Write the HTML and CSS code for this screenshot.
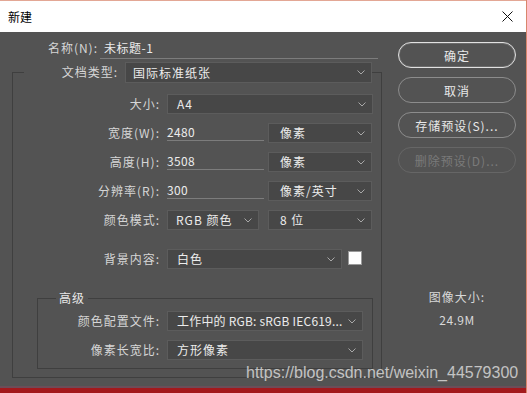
FILE: index.html
```html
<!DOCTYPE html>
<html lang="zh-CN">
<head>
    <meta charset="UTF-8">
    <meta name="viewport" content="width=device-width, initial-scale=1.0">
    <title>新建</title>
    <link rel="stylesheet" href="styles.css">
</head>
<body>
    <div class="window">
        <div class="titlebar">
            <span class="title">新建</span>
            <svg class="close" width="11" height="11" viewBox="0 0 11 11">
                <path d="M0.5 0.5 L10.5 10.5 M10.5 0.5 L0.5 10.5" stroke="#111" stroke-width="1" fill="none"/>
            </svg>
        </div>

        <div class="dialog">
            <div class="form-col">
                <div class="name-row">
                    <span class="name-label">名称(N):</span>
                    <div class="name-input">未标题-1</div>
                </div>

                <fieldset class="group">
                    <legend class="group-head">
                        <div class="row">
                            <span class="label head-label">文档类型:</span>
                            <div class="select head-select">国际标准纸张<svg class="chev" width="8" height="5" viewBox="0 0 8 5"><path d="M0.5 0.5 L4 4 L7.5 0.5" stroke="#a8a8a8" fill="none"/></svg></div>
                        </div>
                    </legend>

                    <div class="row">
                        <span class="label">大小:</span>
                        <div class="select grow">A4<svg class="chev" width="8" height="5" viewBox="0 0 8 5"><path d="M0.5 0.5 L4 4 L7.5 0.5" stroke="#a8a8a8" fill="none"/></svg></div>
                    </div>
                    <div class="row">
                        <span class="label">宽度(W):</span>
                        <div class="field">2480</div>
                        <div class="select unit">像素<svg class="chev" width="8" height="5" viewBox="0 0 8 5"><path d="M0.5 0.5 L4 4 L7.5 0.5" stroke="#a8a8a8" fill="none"/></svg></div>
                    </div>
                    <div class="row">
                        <span class="label">高度(H):</span>
                        <div class="field">3508</div>
                        <div class="select unit">像素<svg class="chev" width="8" height="5" viewBox="0 0 8 5"><path d="M0.5 0.5 L4 4 L7.5 0.5" stroke="#a8a8a8" fill="none"/></svg></div>
                    </div>
                    <div class="row">
                        <span class="label">分辨率(R):</span>
                        <div class="field">300</div>
                        <div class="select unit">像素/英寸<svg class="chev" width="8" height="5" viewBox="0 0 8 5"><path d="M0.5 0.5 L4 4 L7.5 0.5" stroke="#a8a8a8" fill="none"/></svg></div>
                    </div>
                    <div class="row">
                        <span class="label">颜色模式:</span>
                        <div class="select mode">RGB 颜色<svg class="chev" width="8" height="5" viewBox="0 0 8 5"><path d="M0.5 0.5 L4 4 L7.5 0.5" stroke="#a8a8a8" fill="none"/></svg></div>
                        <div class="select unit">8 位<svg class="chev" width="8" height="5" viewBox="0 0 8 5"><path d="M0.5 0.5 L4 4 L7.5 0.5" stroke="#a8a8a8" fill="none"/></svg></div>
                    </div>
                    <div class="row bg-row">
                        <span class="label">背景内容:</span>
                        <div class="select bg">白色<svg class="chev" width="8" height="5" viewBox="0 0 8 5"><path d="M0.5 0.5 L4 4 L7.5 0.5" stroke="#a8a8a8" fill="none"/></svg></div>
                        <div class="swatch"></div>
                    </div>

                    <fieldset class="advanced">
                        <legend class="adv-head">高级</legend>
                        <div class="row">
                            <span class="label adv-label">颜色配置文件:</span>
                            <div class="select grow tight">工作中的 RGB: sRGB IEC619...<svg class="chev" width="8" height="5" viewBox="0 0 8 5"><path d="M0.5 0.5 L4 4 L7.5 0.5" stroke="#a8a8a8" fill="none"/></svg></div>
                        </div>
                        <div class="row">
                            <span class="label adv-label">像素长宽比:</span>
                            <div class="select grow">方形像素<svg class="chev" width="8" height="5" viewBox="0 0 8 5"><path d="M0.5 0.5 L4 4 L7.5 0.5" stroke="#a8a8a8" fill="none"/></svg></div>
                        </div>
                    </fieldset>
                </fieldset>
            </div>

            <div class="side-col">
                <button class="btn primary">确定</button>
                <button class="btn">取消</button>
                <button class="btn">存储预设(S)...</button>
                <button class="btn" disabled>删除预设(D)...</button>

                <div class="image-size">
                    <div>图像大小:</div>
                    <div class="size-value">24.9M</div>
                </div>
            </div>
        </div>

        <div class="taskbar"></div>
        <div class="watermark">https://blog.csdn.net/weixin_44579300</div>
    </div>
</body>
</html>
```

FILE: styles.css
```css
* {
    box-sizing: border-box;
}
body {
    margin: 0;
    width: 527px;
    height: 393px;
    overflow: hidden;
    font-family: "Noto Sans CJK SC", sans-serif;
    font-size: 12px;
    line-height: 16px;
}
.window {
    position: relative;
    height: 393px;
    display: flex;
    flex-direction: column;
    border-right: 1px solid #d9866c;
}
.titlebar {
    height: 32px;
    flex: none;
    background: #fff;
    border-top: 1px solid #e3a795;
    display: flex;
    align-items: center;
    justify-content: space-between;
    padding: 0 13px 0 8px;
    color: #000;
}
.dialog {
    flex: 1;
    display: flex;
    background: #535353;
    padding: 5px 0 0 12px;
    color: #d6d6d6;
    letter-spacing: 1px;
}
.form-col {
    width: 370px;
}

/* name */
.name-row {
    display: flex;
    height: 22px;
}
.name-label {
    width: 86px;
    text-align: right;
    line-height: 21px;
    margin-right: 2px;
}
.name-input {
    width: 278px;
    padding-left: 4px;
    line-height: 21px;
    color: #ececec;
    border-bottom: 1px solid #7c7c7c;
    letter-spacing: 0.5px;
}

/* group boxes */
.group {
    margin: 3px 0 0;
    padding: 12px 8px 0 0;
    border: 1px solid #3f3f3f;
    min-inline-size: 0;
}
.group-head {
    padding: 0;
    margin: 4px 0 0 11px;
}
.row {
    display: flex;
    align-items: flex-start;
    height: 20px;
    margin-top: 9px;
}
.group > .row:first-of-type,
.group-head .row,
.advanced > .row:first-of-type {
    margin-top: 0;
}
.label {
    width: 147px;
    margin-right: 7px;
    text-align: right;
    line-height: 20px;
    flex: none;
}
.head-label {
    width: 94px;
}
.adv-label {
    width: 122px;
}
.select {
    display: flex;
    align-items: center;
    justify-content: space-between;
    height: 20px;
    min-width: 0;
    background: #474747;
    border: 1px solid #5c5c5c;
    padding: 0 6px 0 9px;
    color: #ececec;
    white-space: nowrap;
}
.head-select {
    width: 247px;
    height: 21px;
    padding-left: 7px;
}
.grow {
    flex: 1;
}
.tight {
    letter-spacing: 0.2px;
}
.field {
    width: 97px;
    height: 18px;
    margin-right: 4px;
    border-bottom: 1px solid #7c7c7c;
    line-height: 18px;
    color: #ececec;
    letter-spacing: 0.3px;
}
.unit {
    width: 104px;
    padding-left: 11px;
}
.mode {
    width: 92px;
    margin-right: 9px;
    padding-left: 8px;
}
.bg-row {
    margin-top: 19px;
}
.bg {
    width: 175px;
    margin-right: 6px;
}
.swatch {
    width: 14px;
    height: 14px;
    margin-top: 2px;
    background: #fff;
    border: 1px solid #9a9a9a;
}
.chev {
    flex: none;
}

.advanced {
    margin: 21px 0 8px 24px;
    padding: 5px 9px 8px 0;
    border: 1px solid #3f3f3f;
    min-inline-size: 0;
}
.adv-head {
    margin-left: 18px;
    padding: 0 3px;
    color: #e8e8e8;
}

/* right column */
.side-col {
    width: 118px;
    margin-left: 16px;
    padding-top: 5px;
    display: flex;
    flex-direction: column;
    gap: 9px;
}
.btn {
    height: 26px;
    border-radius: 13px;
    border: 1px solid #8c8c8c;
    background: transparent;
    color: #e8e8e8;
    font-family: inherit;
    font-size: 12px;
    letter-spacing: 1px;
    padding: 0;
}
.btn.primary {
    border-color: #e2e2e2;
    box-shadow: inset 0 0 0 1px rgba(255, 255, 255, 0.15);
}
.btn:disabled {
    border-color: #666;
    color: #7a7a7a;
}
.image-size {
    margin-top: 107px;
    text-align: center;
    color: #d8d8d8;
}
.size-value {
    margin-top: 7px;
    letter-spacing: 0.5px;
}

.taskbar {
    height: 7px;
    flex: none;
    background: #a3191c;
    border-top: 2px solid #6c4d58;
}
.watermark {
    position: absolute;
    left: 246px;
    top: 363px;
    font-family: "Liberation Sans", Arial, sans-serif;
    font-size: 16px;
    line-height: 20px;
    color: rgba(228, 228, 228, 0.78);
}
```
